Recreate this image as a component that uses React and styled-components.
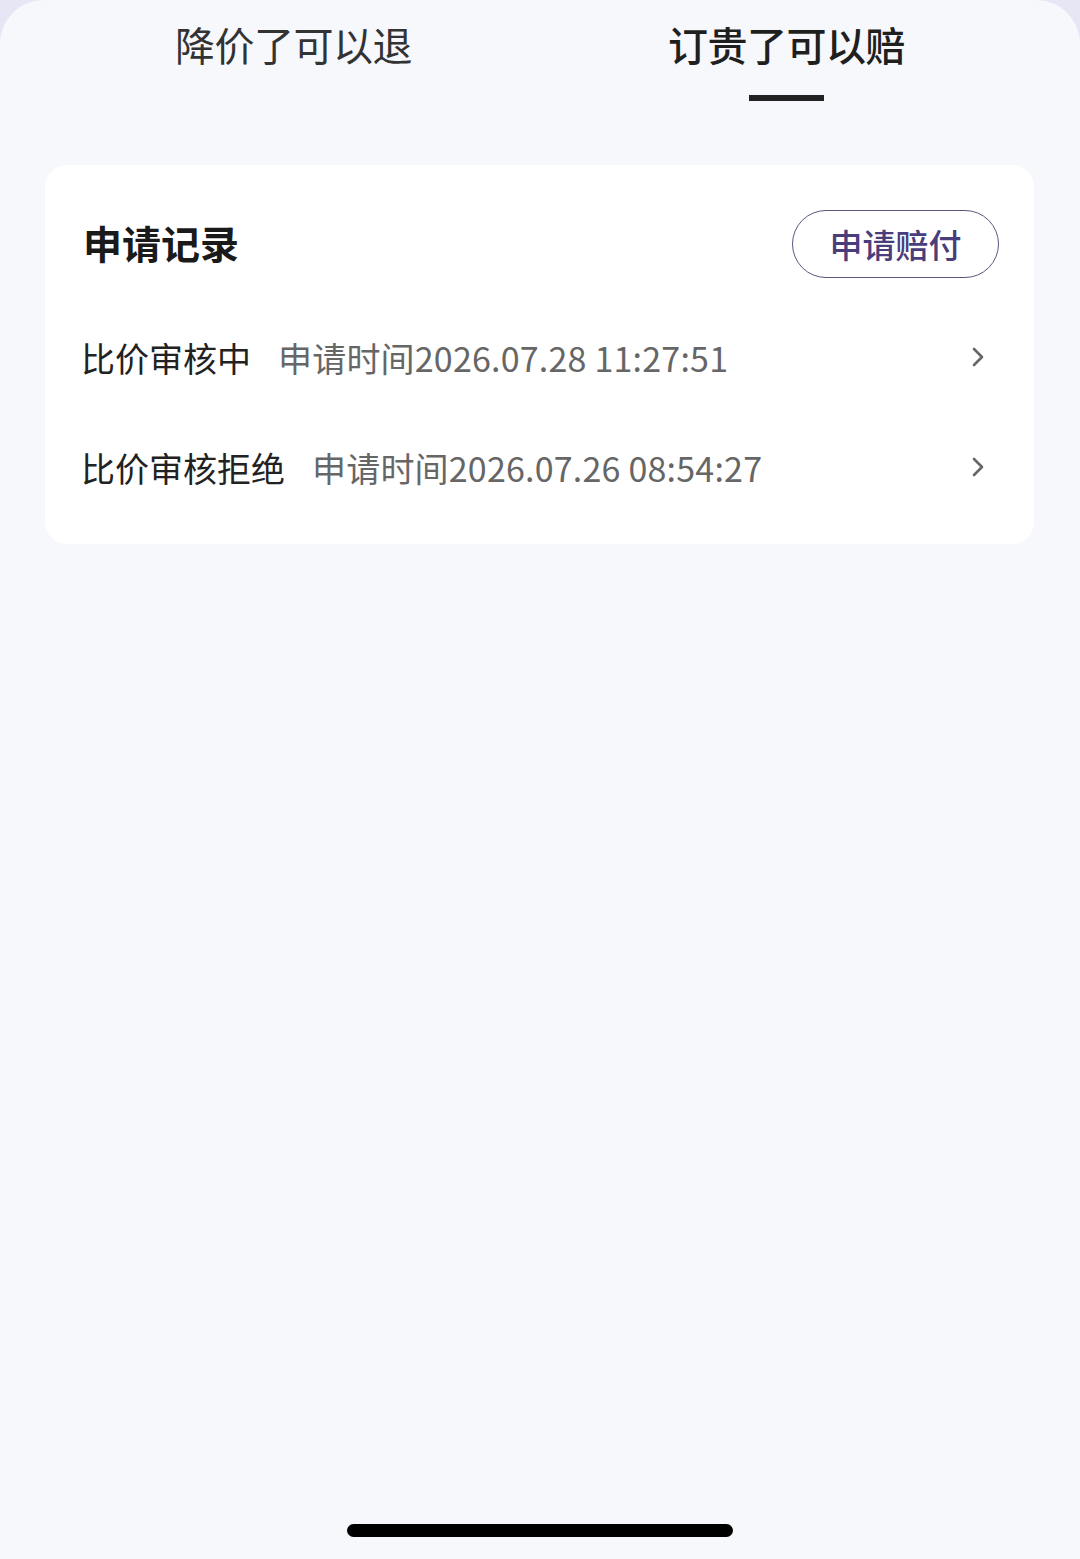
import React from "react";
import styled, { createGlobalStyle } from "styled-components";

const GlobalStyle = createGlobalStyle`
  html, body {
    margin: 0;
    padding: 0;
    background: #e6e6f4;
  }
  body {
    font-family: "Noto Sans CJK SC", "Noto Sans", sans-serif;
  }
`;

const Page = styled.div`
  width: 1080px;
  height: 1559px;
  background: #f7f8fc;
  border-radius: 44px 44px 0 0;
  display: flex;
  flex-direction: column;
  overflow: hidden;
`;

const Tabs = styled.div`
  display: flex;
  justify-content: center;
  gap: 256px;
  padding-top: 17px;
  height: 145px;
  box-sizing: border-box;
`;

const Tab = styled.div`
  display: flex;
  flex-direction: column;
  align-items: center;
  font-size: 40px;
  line-height: 54px;
  color: ${({ active }) => (active ? "#1f1f1f" : "#333")};
  font-weight: ${({ active }) => (active ? 500 : 400)};
  letter-spacing: -0.5px;
`;

const Indicator = styled.div`
  width: 75px;
  height: 6px;
  margin-top: 24px;
  background: ${({ show }) => (show ? "#222" : "transparent")};
`;

const Card = styled.div`
  margin: 20px 46px 0 45px;
  background: #fff;
  border-radius: 22px;
  padding: 45px 35px 22px 38px;
`;

const CardHead = styled.div`
  display: flex;
  align-items: center;
  justify-content: space-between;
  margin-bottom: 24px;
`;

const Title = styled.div`
  font-size: 39px;
  font-weight: 700;
  color: #1a1a1a;
  line-height: 60px;
  margin-top: -4px;
`;

const ApplyButton = styled.button`
  width: 207px;
  height: 68px;
  border: 1.5px solid #5d5480;
  border-radius: 34px;
  background: #fff;
  color: #4a3d7c;
  font-family: inherit;
  font-size: 33px;
  font-weight: 500;
  padding: 0;
  cursor: pointer;
`;

const Row = styled.div`
  display: flex;
  align-items: center;
  height: 110px;
`;

const Status = styled.span`
  font-size: 34px;
  color: #222;
  margin-right: 27px;
  margin-left: -2px;
`;

const Time = styled.span`
  font-size: 34px;
  color: #666;
  flex: 1;
  letter-spacing: 0.2px;
`;

const Chevron = styled.svg`
  width: 14px;
  height: 22px;
  margin-right: 14px;
`;

const HomeBar = styled.div`
  margin: auto auto 22px;
  width: 386px;
  height: 13px;
  border-radius: 7px;
  background: #000;
`;

const records = [
  { status: "比价审核中", time: "申请时间2026.07.28 11:27:51" },
  { status: "比价审核拒绝", time: "申请时间2026.07.26 08:54:27" },
];

const Arrow = () => (
  <Chevron viewBox="0 0 14 22">
    <path d="M3 3 L11 11 L3 19" fill="none" stroke="#666" strokeWidth="2.6" strokeLinecap="round" strokeLinejoin="round" />
  </Chevron>
);

export default function App() {
  return (
    <>
      <GlobalStyle />
      <Page>
        <Tabs>
          <Tab>
            降价了可以退
            <Indicator />
          </Tab>
          <Tab active>
            订贵了可以赔
            <Indicator show />
          </Tab>
        </Tabs>
        <Card>
          <CardHead>
            <Title>申请记录</Title>
            <ApplyButton>申请赔付</ApplyButton>
          </CardHead>
          {records.map((r) => (
            <Row key={r.time}>
              <Status>{r.status}</Status>
              <Time>{r.time}</Time>
              <Arrow />
            </Row>
          ))}
        </Card>
        <HomeBar />
      </Page>
    </>
  );
}
